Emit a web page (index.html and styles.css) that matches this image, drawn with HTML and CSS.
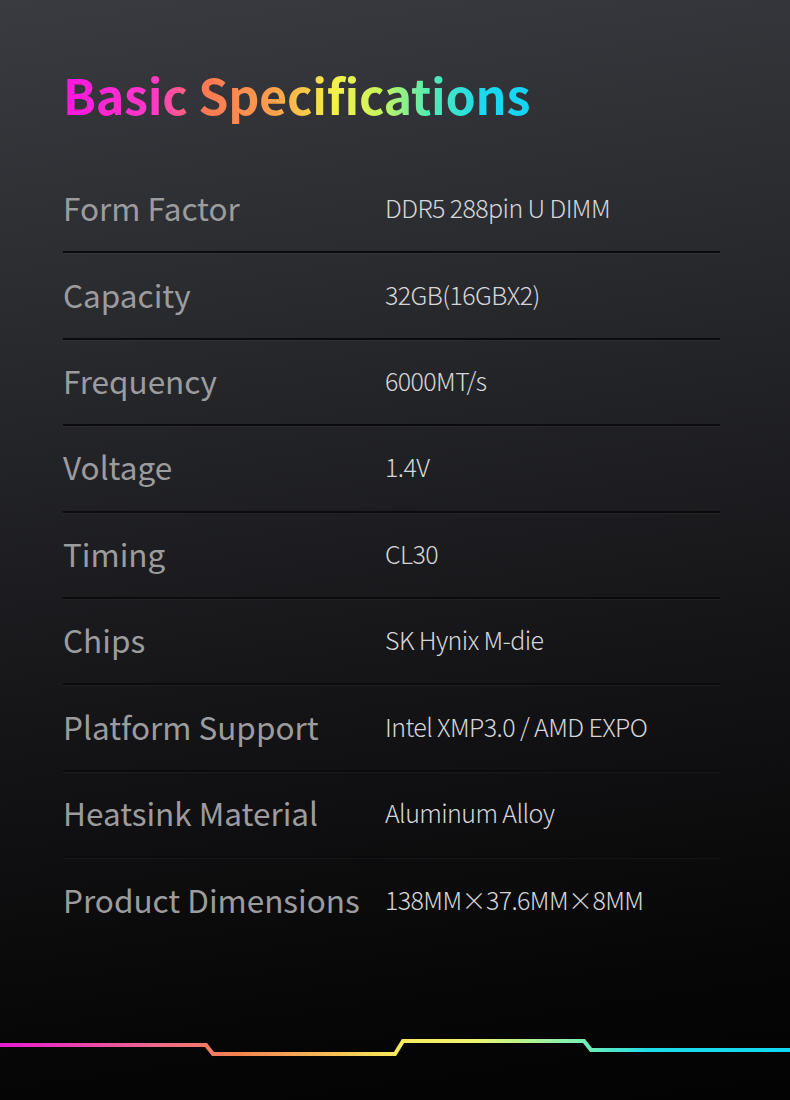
FILE: index.html
```html
<!DOCTYPE html>
<html lang="en">
<head>
<meta charset="utf-8">
<link rel="stylesheet" href="styles.css">
</head>
<body>
<main class="page">
  <h1 class="title">Basic Specifications</h1>
  <section class="specs">
    <div class="row"><span class="label">Form Factor</span><span class="value">DDR5 288pin U DIMM</span></div>
    <div class="row"><span class="label">Capacity</span><span class="value">32GB(16GBX2)</span></div>
    <div class="row"><span class="label">Frequency</span><span class="value">6000MT/s</span></div>
    <div class="row"><span class="label">Voltage</span><span class="value">1.4V</span></div>
    <div class="row"><span class="label">Timing</span><span class="value">CL30</span></div>
    <div class="row"><span class="label">Chips</span><span class="value">SK Hynix M-die</span></div>
    <div class="row"><span class="label">Platform Support</span><span class="value">Intel XMP3.0 / AMD EXPO</span></div>
    <div class="row"><span class="label">Heatsink Material</span><span class="value">Aluminum Alloy</span></div>
    <div class="row last"><span class="label">Product Dimensions</span><span class="value">138MM×37.6MM×8MM</span></div>
  </section>
  <div class="footer">
    <svg class="rgb-line" width="790" height="50" viewBox="0 0 790 50">
      <defs>
        <linearGradient id="rgb" x1="0" y1="0" x2="790" y2="0" gradientUnits="userSpaceOnUse">
          <stop offset="0" stop-color="#e61bd2"/>
          <stop offset="0.2" stop-color="#ee6a8a"/>
          <stop offset="0.3" stop-color="#f5824f"/>
          <stop offset="0.5" stop-color="#f8e85a"/>
          <stop offset="0.6" stop-color="#eef56e"/>
          <stop offset="0.73" stop-color="#7ef0b0"/>
          <stop offset="0.82" stop-color="#1fdde8"/>
          <stop offset="1" stop-color="#10d8f2"/>
        </linearGradient>
      </defs>
      <polyline points="0,25 206,25 213,34 395,34 403,21 584,21 591,30 790,30" fill="none" stroke="url(#rgb)" stroke-width="4"/>
    </svg>
  </div>
</main>
</body>
</html>
```

FILE: styles.css
```css
html, body {
  margin: 0;
  padding: 0;
}
body {
  width: 790px;
  height: 1100px;
  overflow: hidden;
  background: #000;
  font-family: "Noto Sans CJK SC", "Noto Sans", sans-serif;
}
.page {
  width: 790px;
  height: 1100px;
  background:
    linear-gradient(172deg, #3a3b40 0%, #2b2c30 25%, #151518 60%, #060606 88%, #030303 100%);
  display: flex;
  flex-direction: column;
}
.title {
  margin: 64px 0 0 63px;
  font-size: 48.5px;
  font-weight: 700;
  line-height: 60px;
  height: 60px;
  letter-spacing: -0.3px;
  width: max-content;
  background: linear-gradient(90deg, #ff16e0 0%, #ff3bc6 20%, #ff7755 30%, #fb9f4c 45%, #f5f04a 58%, #c8f55e 68%, #55ecb0 78%, #1bd9f0 90%, #16d3f5 100%);
  -webkit-background-clip: text;
  background-clip: text;
  color: transparent;
}
.specs {
  margin: 43px 70px 0 63px;
  display: flex;
  flex-direction: column;
}
.row {
  box-sizing: border-box;
  height: 86.4px;
  display: flex;
  align-items: center;
  padding-bottom: 4px;
  border-bottom: 2px solid #0b0b0d;
  box-shadow: 0 1px 0 rgba(255,255,255,0.04);
}
.row.last {
  border-bottom: none;
  box-shadow: none;
}
.label {
  width: 322px;
  font-size: 31.5px;
  color: #9c9c9e;
  font-weight: 400;
}
.value {
  font-size: 25px;
  color: #d6d6d8;
  font-weight: 300;
  letter-spacing: -0.6px;
}
.footer {
  margin-top: auto;
  height: 80px;
}
.rgb-line {
  display: block;
}
```
